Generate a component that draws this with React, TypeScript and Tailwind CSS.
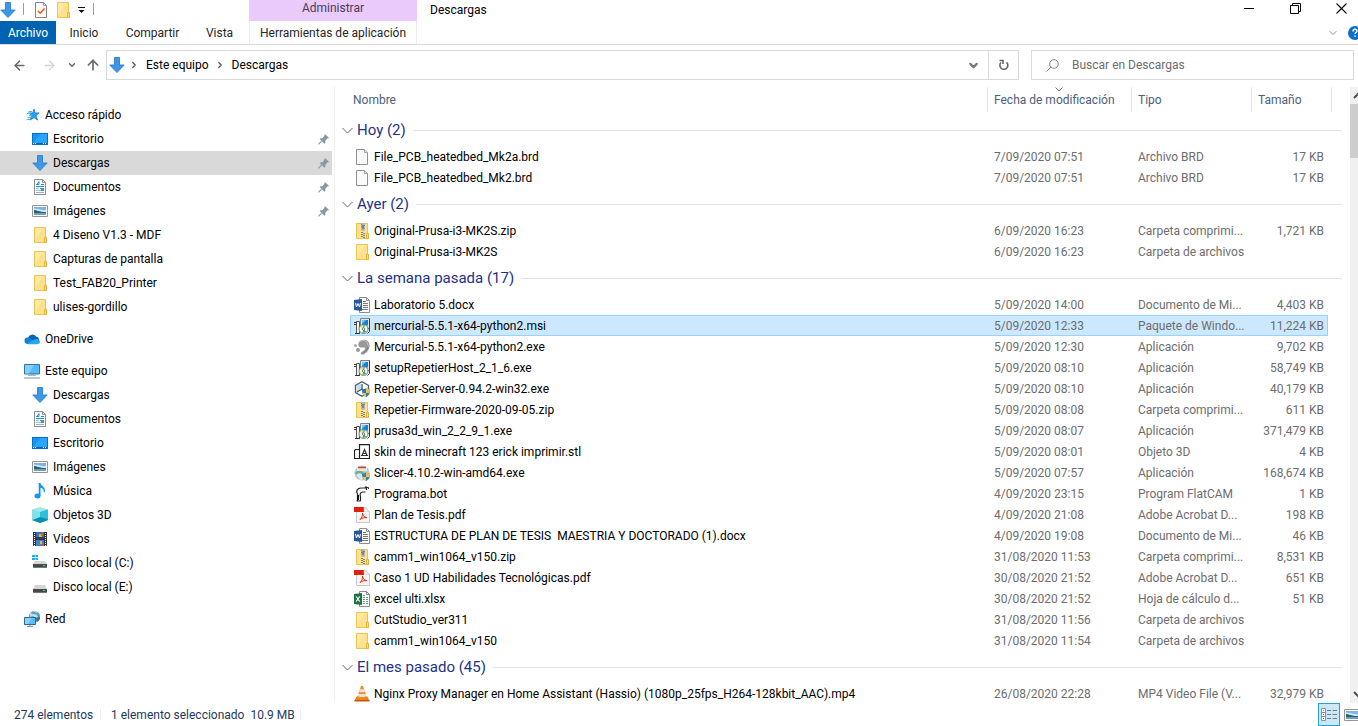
import React, { useState } from "react";
import { ArrowLeft, ArrowRight, ArrowUp, ChevronDown, ChevronRight } from "lucide-react";

type IconName =
  | "down" | "desktop" | "document" | "picture" | "folder" | "zip" | "star" | "cloud" | "pc"
  | "music" | "cube" | "film" | "diskC" | "diskE" | "network" | "blank" | "word" | "excel"
  | "pdf" | "installer" | "mercurial" | "repetier" | "stl" | "slicer" | "bot" | "vlc" | "check";

const DRAWINGS: Record<IconName, React.ReactNode> = {
  down: <path d="M5.500.5h5v7.500h4.700L8 15.500.8 8h4.700z" fill="#3c98e6" stroke="#2b7fc9" strokeWidth=".9" />,
  desktop: (
    <>
      <path d="M0 2h16v12H0z" fill="#0a6fc2" />
      <path d="M1 3h14v9H1z" fill="#0f97fb" />
      <path d="M9 3h6v9H1z" fill="#2ba6ff" />
      <path d="M1 12h14v1H1z" fill="#0b5fae" />
      <path d="M1 12h1v1H1zM3 12h1v1H3zM11 12h1v1h-1zM13 12h1v1h-1z" fill="#fff" />
    </>
  ),
  document: (
    <>
      <path d="M2.500.5h8l3 3v12h-11z" fill="#fff" stroke="#8b8b8b" />
      <path d="M10.500.5v3h3" fill="none" stroke="#8b8b8b" />
      <path d="M4 5.500h3M9 5.500h3M4 7.500h8M8 9.500h4" stroke="#1f8fd6" />
      <path d="M5 5.500l2-3v3" stroke="#1f8fd6" fill="none" />
      <path d="M4 9.500h3M4 11.500h8M4 13.500h8" stroke="#9db4c6" />
      <path d="M9 9h3v3H9z" fill="#4f8fb3" />
    </>
  ),
  picture: (
    <>
      <path d="M.5 2.500h15v11H.5z" fill="#fff" stroke="#969696" />
      <path d="M2 4h12v4H2z" fill="#79b5ee" />
      <path d="M2 6c4-1 8 2 12 1v2H2z" fill="#d6ecfb" />
      <path d="M2 7c3 0 5 2 12 2v1H2z" fill="#33655f" />
      <path d="M2 10h12v2H2z" fill="#6aa0c4" />
    </>
  ),
  folder: (
    <>
      <path d="M2.500.5h11v10l1 .5v4.500h-12z" fill="#ffe08b" stroke="#edc34c" />
      <path d="M3 1h8L3 14z" fill="#ffe9a6" />
      <path d="M12.500 15.500v-5h2v5z" fill="#ffdc7c" stroke="#e3b23a" />
    </>
  ),
  zip: (
    <>
      <path d="M2.500.5h11v10l1 .5v4.500h-12z" fill="#ffe08b" stroke="#edc34c" />
      <path d="M12.500 15.500v-5h2v5z" fill="#ffdc7c" stroke="#e3b23a" />
      <path d="M7 0h4v7l-1 1H8L7 7z" fill="#b4b8bd" />
      <path d="M8.500 2h1v4h-1z" fill="#46505c" />
      <path d="M7 1h1v1H7zM10 2h1v1h-1zM7 3h1v1H7zM7 9h2v1H7zM9 10h2v1H9zM7 11h2v1H7zM9 12h2v1H9zM7 13h2v1H7zM9 14h2v1H9z" fill="#7b828a" />
    </>
  ),
  star: (
    <>
      <path d="M10 2l1.200 3.900h4L12 8.500l1.500 4.600L10 10.500l-3.700 2.600 1.300-4.600-3-2.600h4.200z" fill="#2da1ec" stroke="#1180ca" strokeWidth=".8" />
      <path d="M4.500 4.500H8M3 6.500h4M5 8.500h3M3.500 10.500h4M2.500 12.500h4" stroke="#55b3ec" />
    </>
  ),
  cloud: (
    <>
      <path d="M4 7a4.500 4.500 0 0 1 8-1.500c2 .3 3 1.500 3 3.500l-5 2-7-3z" fill="#0364b8" />
      <path d="M3 13a3.300 3.300 0 0 1 .5-6.500c2-.2 4 1.500 5.500 3.500l-3 3z" fill="#1284d8" />
      <path d="M3 13l7-4.500c3-1.500 6 0 6 2.300 0 1.400-1 2.400-2.500 2.400H4z" fill="#28a8ea" />
    </>
  ),
  pc: (
    <>
      <path d="M.5 1.500h15v9.500H.5z" fill="#53b9fb" stroke="#33719d" />
      <path d="M1 2h9l-5 8.500H1z" fill="#83cffd" />
      <path d="M6 12h4" stroke="#7f98ab" />
      <path d="M4 12.500h8" stroke="#a9bac6" />
      <path d="M0 15h16" stroke="#7e95a8" />
    </>
  ),
  music: (
    <>
      <ellipse cx="5.500" cy="13" rx="3" ry="2.500" fill="#0f96f2" />
      <path d="M6.700 0h1.800c.2 3 5 3.500 4.500 8.500l-1.300 1c.5-3-1.200-4.500-3.200-4.700V13H6.700z" fill="#0f96f2" />
    </>
  ),
  cube: (
    <>
      <path d="M0 2.500l8 2.500v11l-8-3z" fill="#46c3cf" />
      <path d="M16 2.500L8 5v11l8-3z" fill="#0e9fc0" />
      <path d="M0 2.500L8 0l8 2.500L8 5z" fill="#9ce9ec" />
      <path d="M0 13l8-3 8 3-8 3z" fill="#0790a9" />
      <path d="M8 5l8-2.500V12l-8-2z" fill="#2ac2df" />
      <path d="M0 2.500L8 5v5l-8 3z" fill="#83e0e5" />
    </>
  ),
  film: (
    <>
      <path d="M1 1h14v14H1z" fill="#333" />
      <path d="M4 1h8v7H4z" fill="#3d6dc4" />
      <path d="M4 9h8v6H4z" fill="#3f80dc" />
      <path d="M7 3h3v3H7zM8 10h2v3H8z" fill="#e6bd2f" />
      <path d="M9 2h2v3H9zM9 13h2v2H9z" fill="#bd672e" />
      <path d="M4 6h8v2H4z" fill="#2d3f58" />
      <path d="M2.500 2v13M13.500 2v13" stroke="#fff" strokeDasharray="1 1" />
    </>
  ),
  diskC: (
    <>
      <path d="M0 0h3v2H0zM3.500 0H6v2H3.500zM0 3h3v2H0zM3.500 3H6v2H3.500z" fill="#12b3ef" />
      <path d="M3 6h10l2 3H1z" fill="#d5d5d5" />
      <path d="M1 9h14v4H1z" fill="#454a4b" />
      <path d="M1 12h14v1H1z" fill="#777" />
      <path d="M11 10h2v1h-2z" fill="#39e04c" />
    </>
  ),
  diskE: (
    <>
      <path d="M3 6h10l2 4H1z" fill="#d5d5d5" />
      <path d="M1 10h14v4H1z" fill="#454a4b" />
      <path d="M1 13h14v1H1z" fill="#777" />
      <path d="M11 11h2v1h-2z" fill="#39e04c" />
    </>
  ),
  network: (
    <>
      <circle cx="10.500" cy="5.500" r="5.500" fill="#5b9cbe" />
      <path d="M6 2c2 0 3 2 6 1l2 3-3 1-2-2-3 1zM9 0c2 1 3 2 5 2l-3-2z" fill="#c0dce7" />
      <path d="M12 7l4-1c0 3-1 4-3 5z" fill="#32708f" />
      <path d="M.5 6.500h11v7H.5z" fill="#5bbcf8" stroke="#27699a" />
      <path d="M1 7h7l-4 6H1z" fill="#8dd4fd" />
      <path d="M3 15.500h6" stroke="#7f98ab" />
      <path d="M6 14v1" stroke="#7f98ab" />
    </>
  ),
  blank: (
    <>
      <path d="M2.500.5h8l3 3v12h-11z" fill="#fafafa" stroke="#909090" />
      <path d="M10.500.5v3h3" fill="#e2e2e2" stroke="#a5a5a5" />
    </>
  ),
  word: (
    <>
      <path d="M5.500.5h7l3 3v12h-10z" fill="#fff" stroke="#8d8d8d" />
      <path d="M12.500.5v3h3" fill="none" stroke="#8d8d8d" />
      <path d="M9 4.500h3M9 6.500h5M9 8.500h5M9 10.500h5M7 12.500h7" stroke="#777" />
      <path d="M0 3l8-1v12l-8-1z" fill="#2b579a" />
      <path d="M1.500 6l1 4L4 6.500 5.500 10l1-4" fill="none" stroke="#fff" />
    </>
  ),
  excel: (
    <>
      <path d="M5.500.5h7l3 3v12h-10z" fill="#fff" stroke="#8d8d8d" />
      <path d="M12.500.5v3h3" fill="none" stroke="#8d8d8d" />
      <path d="M9 4.500h2M9 6.500h2M12 6.500h2M9 8.500h2M12 8.500h2M9 10.500h2M12 10.500h2M9 12.500h2M12 12.500h2" stroke="#5a9b78" />
      <path d="M0 3l8-1v12l-8-1z" fill="#217346" />
      <path d="M2.200 5.500l3.500 5M5.700 5.500l-3.500 5" stroke="#fff" strokeWidth="1.200" />
    </>
  ),
  pdf: (
    <>
      <path d="M2.500.5h9l4 4v11h-13z" fill="#f5f5f5" stroke="#c8c8c8" />
      <path d="M0 0h10v5H0z" fill="#e0200c" />
      <path d="M10 0l5.500 4.500H10z" fill="#f2f2f2" stroke="#c8c8c8" strokeWidth=".5" />
      <path d="M8.500 6c.3 3 1.500 4 4.500 4.700-3-.3-5 .3-7 1.800 2-1.500 2.500-3.500 2.500-6.500z" fill="none" stroke="#e33422" />
    </>
  ),
  installer: (
    <>
      <path d="M6.500.5h9v10h-9z" fill="#e4e4e4" stroke="#7d8489" />
      <path d="M8 2h6v5.500H8z" fill="#1a7fd0" />
      <path d="M8 2h4L8 6z" fill="#6cc7f5" />
      <path d="M15.500.5v13l-2 2" fill="none" stroke="#3c3c3c" />
      <path d="M2.500 3.500h3v12h-3z" fill="#f4f4f4" stroke="#555" />
      <path d="M0 4.500h3M0 6.500h2M1 15.500h5" stroke="#333" />
      <circle cx="9.500" cy="11" r="4.500" fill="#f1f5f6" stroke="#555" strokeWidth=".7" />
      <path d="M9.500 11L6 9l2-2z" fill="#e9e33a" />
      <path d="M9.500 11l-1-4.200h3z" fill="#3ccbd2" />
      <path d="M9.500 11l3 3-4 1z" fill="#35b552" />
      <circle cx="9.500" cy="11" r="1.200" fill="#fff" stroke="#333" strokeWidth=".6" />
    </>
  ),
  mercurial: (
    <>
      <path d="M5 3C8-1 16 0 15.500 7c-.3 4-3 7-6 8.500-2 .7-3.500-1-2-2.500 2-1.300 4-2.500 3.500-4-.5-1.600-5 1-6.500-2C4 5.500 4.300 4 5 3z" fill="#999" />
      <path d="M6 2.500c4-2.500 8 0 8 4" fill="none" stroke="#c4c4c4" />
      <path d="M14 8c-.5 3-3 5-5 6" fill="none" stroke="#777" />
      <circle cx="4" cy="11" r="2" fill="#999" />
      <circle cx="1.500" cy="6.500" r="1.500" fill="#aaa" />
    </>
  ),
  repetier: (
    <>
      <path d="M8 .8l6.500 3.700v7L8 15.200l-6.500-3.700v-7z" fill="#fff" stroke="#4c5c68" strokeWidth="1.300" />
      <path d="M7 2v6L2.500 11V5z" fill="#c3dfee" />
      <path d="M8 3v5l5 3M8 8l-5 3" stroke="#35566e" strokeWidth="1.300" fill="none" />
      <path d="M8 8.500l4-1 4 1c0 4-1 6-4 7.500-3-1.500-4-3.500-4-7.500z" fill="#2378c9" />
      <path d="M12 7.500l4 1c0 1.500 0 2-.4 3.500H12zM8.400 12H12v4c-2-1-3-2-3.600-4z" fill="#f5c12e" />
    </>
  ),
  stl: (
    <>
      <path d="M5.500.7h10v13.800h-10z" fill="#fff" stroke="#222" strokeWidth="1.200" />
      <path d="M5 5.500H1.500l-1 1v8H14" fill="none" stroke="#222" strokeWidth="1.200" />
      <path d="M8 11.500l2.500-6 2.500 6M9 9.500h3M7 11.500h7" fill="none" stroke="#333" strokeWidth="1.200" />
    </>
  ),
  slicer: (
    <>
      <circle cx="8" cy="8" r="7.500" fill="#b6cbd0" />
      <path d="M3 2h10v4H3z" fill="#e7e7df" />
      <path d="M4 2.500h8" stroke="#c9443e" strokeWidth="1.500" />
      <path d="M1 8c2-3 7-3 9 0-1 4-3 5-6 5z" fill="#78a98f" />
      <path d="M2 10c3-3 7-2 8 4l-4 1z" fill="#dce8ea" />
      <path d="M8 9l4-1.500L16 9c0 4-1 5.500-4 7-3-1.500-4-3.500-4-7z" fill="#3282ce" />
      <path d="M12 7.500L16 9l-.4 3H12zM8.400 12H12v4c-2-1-3-2-3.600-4z" fill="#eec53c" />
    </>
  ),
  bot: (
    <>
      <path d="M3.500 15V8C1.500 5 3.500 2 7 2h4.500V1h1v3M6.500 15v-4c-1-3 0-5 2.500-5h2.500" fill="none" stroke="#222" strokeWidth="1.200" />
      <path d="M3 9v5h2V9z" fill="#111" />
      <path d="M2.500 15h4" stroke="#222" />
      <path d="M13 1.500h1.500V3" fill="none" stroke="#333" />
    </>
  ),
  vlc: (
    <>
      <path d="M2.500 10.500h11l2 4.500H.5z" fill="#f07c17" />
      <path d="M7 0h2l4 12c-2 1.500-8 1.500-10 0z" fill="#f28a20" />
      <path d="M6 3.200h4l.9 2.600c-1.500.7-4 .7-5.800 0zM4.400 8h7.200l.8 2.200c-2 1-6.500 1-8.800 0z" fill="#e8e5e0" />
      <path d="M.5 14h15v1.500H.5z" fill="#c4560b" />
    </>
  ),
  check: (
    <>
      <path d="M2.500.5h8l3 3v12h-11z" fill="#fbfbfb" stroke="#858585" />
      <path d="M10.500.5v3h3" fill="none" stroke="#999" />
      <path d="M5 9l2.200 2.200L11.500 6.500" fill="none" stroke="#ee5a1c" strokeWidth="1.600" />
    </>
  ),
};

function Icon({ name }: { name: IconName }) {
  return (
    <svg viewBox="0 0 16 16" className="size-4 shrink-0" aria-hidden="true">
      {DRAWINGS[name]}
    </svg>
  );
}

function Pin() {
  return (
    <svg viewBox="0 0 12 12" className="size-[11px] shrink-0" aria-hidden="true">
      <path d="M7.500 0L12 4l-1 1-1 0-2 2.500v2.200l-1 .8L1.800 5.500l1-1H5L7 2V1z" fill="#8b98a3" />
      <path d="M3.800 7.800L.5 11.300" stroke="#8b98a3" strokeWidth="1.200" />
    </svg>
  );
}

type Place = { label: string; icon: IconName; root?: boolean; pinned?: boolean; current?: boolean };

const PLACES: Place[][] = [
  [
    { label: "Acceso rápido", icon: "star", root: true },
    { label: "Escritorio", icon: "desktop", pinned: true },
    { label: "Descargas", icon: "down", pinned: true, current: true },
    { label: "Documentos", icon: "document", pinned: true },
    { label: "Imágenes", icon: "picture", pinned: true },
    { label: "4 Diseno V1.3 - MDF", icon: "folder" },
    { label: "Capturas de pantalla", icon: "folder" },
    { label: "Test_FAB20_Printer", icon: "folder" },
    { label: "ulises-gordillo", icon: "folder" },
  ],
  [{ label: "OneDrive", icon: "cloud", root: true }],
  [
    { label: "Este equipo", icon: "pc", root: true },
    { label: "Descargas", icon: "down" },
    { label: "Documentos", icon: "document" },
    { label: "Escritorio", icon: "desktop" },
    { label: "Imágenes", icon: "picture" },
    { label: "Música", icon: "music" },
    { label: "Objetos 3D", icon: "cube" },
    { label: "Videos", icon: "film" },
    { label: "Disco local (C:)", icon: "diskC" },
    { label: "Disco local (E:)", icon: "diskE" },
  ],
  [{ label: "Red", icon: "network", root: true }],
];

type FileRow = [icon: IconName, name: string, date: string, type: string, size: string];

const GROUPS: { title: string; files: FileRow[] }[] = [
  {
    title: "Hoy (2)",
    files: [
      ["blank", "File_PCB_heatedbed_Mk2a.brd", "7/09/2020 07:51", "Archivo BRD", "17 KB"],
      ["blank", "File_PCB_heatedbed_Mk2.brd", "7/09/2020 07:51", "Archivo BRD", "17 KB"],
    ],
  },
  {
    title: "Ayer (2)",
    files: [
      ["zip", "Original-Prusa-i3-MK2S.zip", "6/09/2020 16:23", "Carpeta comprimi...", "1,721 KB"],
      ["folder", "Original-Prusa-i3-MK2S", "6/09/2020 16:23", "Carpeta de archivos", ""],
    ],
  },
  {
    title: "La semana pasada (17)",
    files: [
      ["word", "Laboratorio 5.docx", "5/09/2020 14:00", "Documento de Mi...", "4,403 KB"],
      ["installer", "mercurial-5.5.1-x64-python2.msi", "5/09/2020 12:33", "Paquete de Windo...", "11,224 KB"],
      ["mercurial", "Mercurial-5.5.1-x64-python2.exe", "5/09/2020 12:30", "Aplicación", "9,702 KB"],
      ["installer", "setupRepetierHost_2_1_6.exe", "5/09/2020 08:10", "Aplicación", "58,749 KB"],
      ["repetier", "Repetier-Server-0.94.2-win32.exe", "5/09/2020 08:10", "Aplicación", "40,179 KB"],
      ["zip", "Repetier-Firmware-2020-09-05.zip", "5/09/2020 08:08", "Carpeta comprimi...", "611 KB"],
      ["installer", "prusa3d_win_2_2_9_1.exe", "5/09/2020 08:07", "Aplicación", "371,479 KB"],
      ["stl", "skin de minecraft 123 erick imprimir.stl", "5/09/2020 08:01", "Objeto 3D", "4 KB"],
      ["slicer", "Slicer-4.10.2-win-amd64.exe", "5/09/2020 07:57", "Aplicación", "168,674 KB"],
      ["bot", "Programa.bot", "4/09/2020 23:15", "Program FlatCAM", "1 KB"],
      ["pdf", "Plan de Tesis.pdf", "4/09/2020 21:08", "Adobe Acrobat D...", "198 KB"],
      ["word", "ESTRUCTURA DE PLAN DE TESIS  MAESTRIA Y DOCTORADO (1).docx", "4/09/2020 19:08", "Documento de Mi...", "46 KB"],
      ["zip", "camm1_win1064_v150.zip", "31/08/2020 11:53", "Carpeta comprimi...", "8,531 KB"],
      ["pdf", "Caso 1 UD Habilidades Tecnológicas.pdf", "30/08/2020 21:52", "Adobe Acrobat D...", "651 KB"],
      ["excel", "excel ulti.xlsx", "30/08/2020 21:52", "Hoja de cálculo d...", "51 KB"],
      ["folder", "CutStudio_ver311", "31/08/2020 11:56", "Carpeta de archivos", ""],
      ["folder", "camm1_win1064_v150", "31/08/2020 11:54", "Carpeta de archivos", ""],
    ],
  },
  {
    title: "El mes pasado (45)",
    files: [
      ["vlc", "Nginx Proxy Manager en Home Assistant (Hassio) (1080p_25fps_H264-128kbit_AAC).mp4", "26/08/2020 22:28", "MP4 Video File (V...", "32,979 KB"],
    ],
  },
];

function TitleBar() {
  return (
    <div className="flex h-[21px] shrink-0">
      <div className="flex w-[249px] shrink-0 items-start pt-[2px]">
        <Icon name="down" />
        <span className="ml-[7px] mt-px h-3 w-px bg-[#9a9a9a]" />
        <button type="button" aria-label="Propiedades" className="ml-[9px]"><Icon name="check" /></button>
        <button type="button" aria-label="Nueva carpeta" className="ml-[6px]"><Icon name="folder" /></button>
        <button type="button" aria-label="Personalizar barra" className="ml-[6px] mt-[5px]">
          <svg viewBox="0 0 9 7" className="h-[7px] w-[9px]" aria-hidden="true">
            <path d="M1 .5h7" stroke="#111" />
            <path d="M1.500 3h6l-3 3z" fill="#111" />
          </svg>
        </button>
        <span className="ml-[7px] mt-px h-3 w-px bg-[#9a9a9a]" />
      </div>
      <div className="flex w-[168px] shrink-0 justify-center bg-[#e9cafb] text-[#4a3b55] leading-4">Administrar</div>
      <h1 className="flex-1 pl-[13px] leading-[20px]">Descargas</h1>
      <div className="-mr-[6px] flex h-[17px] shrink-0">
        <button type="button" aria-label="Minimizar" className="flex w-[46px] items-center justify-center">
          <svg viewBox="0 0 11 11" className="size-[11px]"><path d="M0 5.500h10" stroke="#000" /></svg>
        </button>
        <button type="button" aria-label="Restaurar" className="flex w-[46px] items-center justify-center">
          <svg viewBox="0 0 11 11" className="size-[11px]"><path d="M.5 2.500h8v8h-8zM2.500 2.500v-2h8v8h-2" fill="none" stroke="#000" /></svg>
        </button>
        <button type="button" aria-label="Cerrar" className="flex w-[46px] items-center justify-center">
          <svg viewBox="0 0 11 11" className="size-[11px]"><path d="M.5.5l10 10M10.500.5l-10 10" stroke="#000" strokeWidth="1.100" /></svg>
        </button>
      </div>
    </div>
  );
}

function RibbonTabs() {
  return (
    <div className="flex h-6 shrink-0 items-stretch border-b border-[#dadbdc] text-[#262626]">
      <button type="button" className="w-14 bg-[#0063b1] text-white">Archivo</button>
      <button type="button" className="w-14">Inicio</button>
      <button type="button" className="w-[81px]">Compartir</button>
      <button type="button" className="w-[53px]">Vista</button>
      <button type="button" className="ml-[3px] w-[168px] border-x border-[#ececec] whitespace-nowrap">Herramientas de aplicación</button>
      <div className="flex-1" />
      <button type="button" aria-label="Expandir la cinta" className="mr-[9px] text-[#8a8a8a]">
        <ChevronDown className="size-3" />
      </button>
      <button type="button" aria-label="Ayuda" className="-mr-1 flex items-center">
        <svg viewBox="0 0 14 14" className="size-[14px]">
          <circle cx="7" cy="7" r="7" fill="#0a70cc" />
          <path d="M5 5.500c0-3 4-3 4-.5 0 1.500-2 1.500-2 3M7 9.500V11" fill="none" stroke="#fff" strokeWidth="1.400" />
        </svg>
      </button>
    </div>
  );
}

function AddressBar() {
  return (
    <div className="flex shrink-0 items-center pt-[5px] pr-1">
      <div className="flex w-[106px] shrink-0 items-center pl-3 text-[#6a6a6a]">
        <button type="button" aria-label="Atrás"><ArrowLeft className="size-[15px]" strokeWidth={2.4} /></button>
        <button type="button" aria-label="Adelante" className="ml-[15px] text-[#d4d4d4]"><ArrowRight className="size-[15px]" strokeWidth={2.2} /></button>
        <button type="button" aria-label="Recientes" className="ml-[10px]"><ChevronDown className="size-[10px]" strokeWidth={3.5} /></button>
        <button type="button" aria-label="Subir" className="ml-2"><ArrowUp className="size-4" strokeWidth={2.6} /></button>
      </div>
      <nav aria-label="Ruta" className="flex h-[30px] flex-1 items-center border border-[#d9d9d9] pl-[2px]">
        <Icon name="down" />
        <ChevronRight className="ml-1 size-[10px] text-[#555]" strokeWidth={3} />
        <a href="#equipo" className="ml-[7px]">Este equipo</a>
        <ChevronRight className="ml-[6px] size-[10px] text-[#555]" strokeWidth={3} />
        <a href="#descargas" className="ml-[7px]">Descargas</a>
        <div className="flex-1" />
        <button type="button" aria-label="Ubicaciones anteriores" className="flex w-[29px] justify-center text-[#777]">
          <ChevronDown className="size-[13px]" strokeWidth={4} />
        </button>
        <button type="button" aria-label="Actualizar" className="flex h-full w-[30px] items-center justify-center border-l border-[#d9d9d9]">
          <svg viewBox="0 0 12 12" className="size-3">
            <path d="M3 3.500a4 4 0 1 0 5.500-.2M1.500 1.500H5v3.500" fill="none" stroke="#666" strokeWidth="1.600" />
          </svg>
        </button>
      </nav>
      <label className="ml-3 flex h-[30px] w-[323px] shrink-0 items-center border border-[#d9d9d9] pl-[14px]">
        <svg viewBox="0 0 13 13" className="size-[13px] shrink-0" aria-hidden="true">
          <circle cx="8" cy="5" r="4.300" fill="none" stroke="#8a7f88" />
          <path d="M5 8L.5 12.500" stroke="#8a7f88" />
        </svg>
        <input type="search" aria-label="Buscar" placeholder="Buscar en Descargas" className="ml-[13px] w-full outline-none placeholder:text-[#6d6d6d]" />
      </label>
    </div>
  );
}

function Sidebar() {
  return (
    <nav aria-label="Panel de navegación" className="flex w-[335px] shrink-0 flex-col gap-2 overflow-hidden border-r border-[#f0f0f0] pt-4 pr-[2px]">
      {PLACES.map((section) => (
        <ul key={section[0].label}>
          {section.map((p) => (
            <li key={p.label}>
              <a
                href="#lugar"
                className={`flex h-6 items-center gap-[5px] pr-[3px] ${p.root ? "pl-6" : "pl-8"} ${p.current ? "bg-[#d9d9d9]" : ""}`}
              >
                <Icon name={p.icon} />
                <span className="flex-1">{p.label}</span>
                {p.pinned && <Pin />}
              </a>
            </li>
          ))}
        </ul>
      ))}
    </nav>
  );
}

function FileTable() {
  const [selected, setSelected] = useState("mercurial-5.5.1-x64-python2.msi");
  return (
    <div className="min-w-0 flex-1 overflow-hidden pr-2">
      <table className="w-full table-fixed border-separate border-spacing-0 whitespace-nowrap">
        <colgroup>
          <col className="w-[15px]" />
          <col />
          <col className="w-[144px]" />
          <col className="w-[120px]" />
          <col className="w-[77px]" />
          <col className="w-[14px]" />
        </colgroup>
        <thead>
          <tr className="h-[27px] text-left text-[#4c607a]">
            <th />
            <th className="p-0 pl-[3px] align-top font-normal leading-[26px]">Nombre</th>
            <th className="relative p-0 align-top font-normal">
              <div className="h-[25px] border-l border-[#e5e5e5] pl-[6px] leading-[26px]">Fecha de modificación</div>
              <svg viewBox="0 0 8 5" className="absolute top-0 left-[68px] h-[5px] w-2" aria-hidden="true">
                <path d="M.5.5L4 4 7.500.5" fill="none" stroke="#777" />
              </svg>
            </th>
            <th className="p-0 align-top font-normal">
              <div className="h-[25px] border-l border-[#e5e5e5] pl-[6px] leading-[26px]">Tipo</div>
            </th>
            <th colSpan={2} className="p-0 align-top font-normal">
              <div className="mr-[10px] h-[25px] border-x border-[#e5e5e5] pl-[6px] leading-[26px]">Tamaño</div>
            </th>
          </tr>
        </thead>
        {GROUPS.map((g) => (
          <tbody key={g.title}>
            <tr className="h-8">
              <th colSpan={6} scope="rowgroup" className="p-0 pl-[7px] font-normal">
                <div className="flex items-center">
                  <svg viewBox="0 0 11 7" className="h-[7px] w-[11px]" aria-hidden="true">
                    <path d="M.5 1l5 5 5-5" fill="none" stroke="#666" />
                  </svg>
                  <span className="ml-1 text-[15px] leading-5 text-[#1e3287]">{g.title}</span>
                  <span className="ml-[7px] h-px flex-1 bg-[#e2e2e2]" />
                </div>
              </th>
            </tr>
            {g.files.map(([icon, name, date, type, size]) => {
              const on = name === selected;
              const mid = on ? "bg-[#cce8ff] shadow-[inset_0_1px_#99d1ff,inset_0_-1px_#99d1ff]" : "";
              return (
                <tr key={name} className="h-[21px] text-[#6d6d6d]" aria-selected={on} onClick={() => setSelected(name)}>
                  <td className="p-0" />
                  <td className={`p-0 ${on ? "bg-[#cce8ff] shadow-[inset_0_1px_#99d1ff,inset_0_-1px_#99d1ff,inset_1px_0_#99d1ff]" : ""}`}>
                    <div className="flex items-center gap-1 pl-1 text-black">
                      <Icon name={icon} />
                      <span className="whitespace-pre">{name}</span>
                    </div>
                  </td>
                  <td className={`p-0 pl-[7px] ${mid}`}>{date}</td>
                  <td className={`p-0 pl-[7px] ${mid}`}>{type}</td>
                  <td className={`p-0 pr-1 text-right ${on ? "bg-[#cce8ff] shadow-[inset_0_1px_#99d1ff,inset_0_-1px_#99d1ff,inset_-1px_0_#99d1ff]" : ""}`}>{size}</td>
                  <td className="p-0" />
                </tr>
              );
            })}
          </tbody>
        ))}
      </table>
    </div>
  );
}

function ScrollRail() {
  return (
    <div className="w-2 shrink-0 overflow-hidden">
      <div className="flex h-full w-[17px] flex-col items-center bg-[#f0f0f0]">
        <svg viewBox="0 0 17 17" className="size-[17px] shrink-0" aria-hidden="true"><path d="M4 11l4.500-4.500L13 11" fill="none" stroke="#505050" strokeWidth="2" /></svg>
        <div className="h-[54px] w-full bg-[#cdcdcd]" />
        <div className="flex-1" />
        <svg viewBox="0 0 17 17" className="size-[17px] shrink-0" aria-hidden="true"><path d="M4 6l4.500 4.500L13 6" fill="none" stroke="#505050" strokeWidth="2" /></svg>
      </div>
    </div>
  );
}

function StatusBar() {
  return (
    <footer className="flex h-[23px] shrink-0 items-center text-[#1e395b]">
      <span className="w-[100px] pl-[14px]">274 elementos</span>
      <span className="h-[11px] w-px bg-[#ececec]" />
      <span className="w-[199px] pl-[10px] whitespace-pre">1 elemento seleccionado  10.9 MB</span>
      <span className="h-[11px] w-px bg-[#ececec]" />
      <div className="flex-1" />
      <button type="button" aria-label="Detalles" className="flex h-[23px] w-[22px] items-center justify-center border border-[#26a0da] bg-[#cbe8f6]">
        <svg viewBox="0 0 16 13" className="h-[13px] w-4">
          <path d="M.5.5h4v12h-4zM.5 4.500h4M.5 8.500h4" fill="#fff" stroke="#8e8e8e" />
          <path d="M6 2.500h4M11.500 2.500H16M6 6.500h4M11.500 6.500H16M6 10.500h4M11.500 10.500H16" stroke="#6f7f88" />
          <path d="M2 2h1v1H2z" fill="#3b7" /><path d="M2 6h1v1H2z" fill="#27c" /><path d="M2 10h1v1H2z" fill="#d22" />
        </svg>
      </button>
      <button type="button" aria-label="Miniaturas" className="-mr-[2px] ml-1"><Icon name="picture" /></button>
    </footer>
  );
}

export default function App() {
  return (
    <div className="flex h-screen flex-col overflow-hidden bg-white font-['Roboto','Noto_Sans',sans-serif] text-[12px] leading-4 text-black">
      <TitleBar />
      <RibbonTabs />
      <AddressBar />
      <main className="flex min-h-0 flex-1 pt-[7px]">
        <Sidebar />
        <FileTable />
        <ScrollRail />
      </main>
      <StatusBar />
    </div>
  );
}
